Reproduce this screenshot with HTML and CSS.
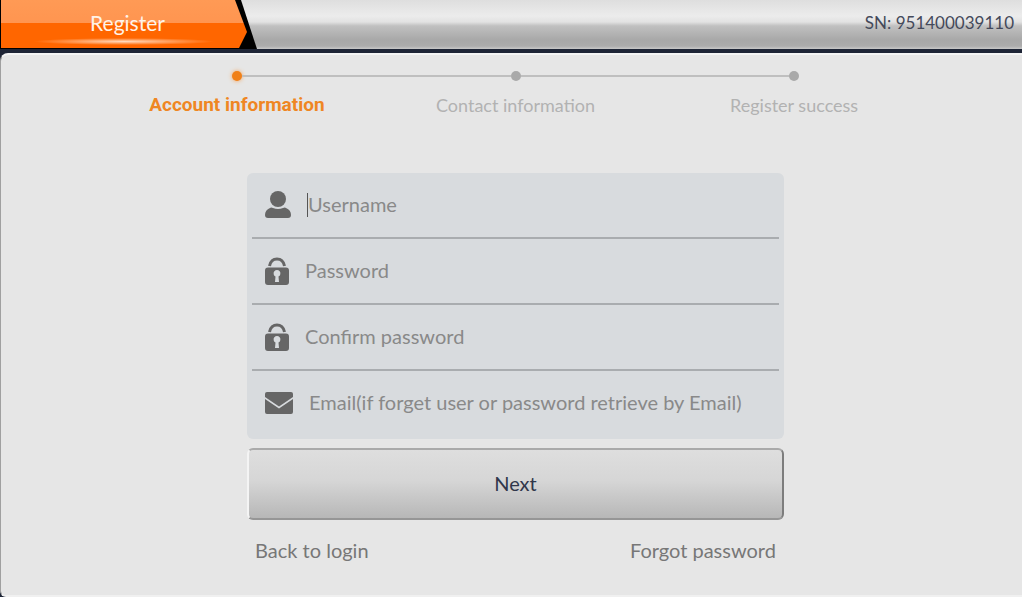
FILE: index.html
```html
<!DOCTYPE html>
<html lang="en">
<head>
    <meta charset="UTF-8">
    <meta name="viewport" content="width=device-width, initial-scale=1.0">
    <title>Register</title>
    <link rel="stylesheet" href="styles.css">
</head>
<body>
    <header class="topbar">
        <div class="title-tab">
            <h1 class="title">Register</h1>
        </div>
        <div class="serial">SN: 951400039110</div>
    </header>

    <main class="panel">
        <ol class="steps">
            <li class="step active"><span class="marker"><span class="dot"></span></span>Account information</li>
            <li class="step"><span class="marker"><span class="dot"></span></span>Contact information</li>
            <li class="step"><span class="marker"><span class="dot"></span></span>Register success</li>
        </ol>

        <form class="register-form">
            <div class="fields">
                <div class="field">
                    <label for="username" aria-label="Username">
                        <svg width="26" height="28" viewBox="0 0 26 28">
                            <circle cx="13" cy="8" r="8"/>
                            <path d="M5 17 Q6 16 8 17 Q13 19 18 17 Q20 16 21 17 Q26 19 26 24 Q26 27 23 27 H3 Q0 27 0 24 Q0 19 5 17 Z"/>
                        </svg>
                    </label>
                    <span class="caret"></span>
                    <input type="text" id="username" placeholder="Username">
                </div>
                <div class="field">
                    <label for="password" aria-label="Password">
                        <svg width="24" height="28" viewBox="0 0 24 28">
                            <path class="shackle" d="M4.5 9 C6 -0.5 18 -0.5 19.5 9"/>
                            <path fill-rule="evenodd" d="M3 10.5 H21 Q24 10.5 24 13.5 V25 Q24 28 21 28 H3 Q0 28 0 25 V13.5 Q0 10.5 3 10.5 Z M10.5 19.5 L10 25 H14 L13.5 19.5 A3.4 3.4 0 1 0 10.5 19.5 Z"/>
                        </svg>
                    </label>
                    <input type="password" id="password" placeholder="Password">
                </div>
                <div class="field">
                    <label for="confirm" aria-label="Confirm password">
                        <svg width="24" height="28" viewBox="0 0 24 28">
                            <path class="shackle" d="M4.5 9 C6 -0.5 18 -0.5 19.5 9"/>
                            <path fill-rule="evenodd" d="M3 10.5 H21 Q24 10.5 24 13.5 V25 Q24 28 21 28 H3 Q0 28 0 25 V13.5 Q0 10.5 3 10.5 Z M10.5 19.5 L10 25 H14 L13.5 19.5 A3.4 3.4 0 1 0 10.5 19.5 Z"/>
                        </svg>
                    </label>
                    <input type="password" id="confirm" placeholder="Confirm password">
                </div>
                <div class="field">
                    <label for="email" aria-label="Email">
                        <svg width="28" height="22" viewBox="0 0 28 22">
                            <path d="M2 0 H26 Q28 0 28 2 V5 L14 14.5 L0 5 V2 Q0 0 2 0 Z"/>
                            <path d="M0 7 L14 16.5 L28 7 V20 Q28 22 26 22 H2 Q0 22 0 20 Z"/>
                        </svg>
                    </label>
                    <input type="email" id="email" placeholder="Email(if forget user or password retrieve by Email)">
                </div>
            </div>

            <button type="submit" class="btn-next">Next</button>

            <div class="links">
                <a href="#">Back to login</a>
                <a href="#">Forgot password</a>
            </div>
        </form>
    </main>
</body>
</html>
```
FILE: styles.css
```css
* {
    margin: 0;
    padding: 0;
    box-sizing: border-box;
}

body {
    min-height: 100vh;
    display: flex;
    flex-direction: column;
    background-color: #1e2536;
    font-family: Lato, sans-serif;
    font-size: 20px;
    line-height: 24px;
}

.topbar {
    display: flex;
    justify-content: space-between;
    height: 49px;
    margin-bottom: 4px;
    background: linear-gradient(#dedede 0, #ececec 16px, #e2e2e2 22px, #c0c0c0 26px, #a8a8a8 40px, #acacac 46px, #c8c8c8 49px);
}

.title-tab {
    width: 257px;
    background-color: #000;
    clip-path: polygon(0 0, 241px 0, 100% 100%, 0 100%);
}

.title {
    width: 247px;
    height: 48px;
    background:
        radial-gradient(closest-side, #ffd9bd, rgba(255, 140, 60, 0)) 34px 38px / 180px 7px no-repeat,
        linear-gradient(#ff9a55 0, #ff9550 23px, #ff6600 23px);
    clip-path: polygon(1px 0, 235px 0, 100% 32px, 239px 100%, 1px 100%);
    color: #fff3e8;
    font-size: 21px;
    font-weight: normal;
    line-height: 46px;
    text-align: center;
    text-indent: 8px;
}

.serial {
    padding-right: 8px;
    color: #44495a;
    font-size: 17px;
    line-height: 46px;
}

.panel {
    flex: 1;
    padding: 16px 0 32px 8px;
    background-color: #e6e6e6;
    border-top: 2px solid #f4f4f4;
    border-bottom: 2px solid #f0f0f0;
    border-left: 1px solid #a0a0a0;
    border-radius: 8px 0 0 6px;
}

.steps {
    display: flex;
    width: 82.5%;
    margin: 0 auto 56px;
    list-style: none;
}

.step {
    flex: 1;
    color: #b2b2b2;
    font-size: 18px;
    text-align: center;
}

.marker {
    display: flex;
    align-items: center;
    height: 10px;
    margin-bottom: 12px;
}

.marker::before,
.marker::after {
    content: '';
    flex: 1;
    height: 2px;
    background-color: #bfbfbf;
}

.step:first-child .marker::before,
.step:last-child .marker::after {
    background: none;
}

.dot {
    width: 10px;
    height: 10px;
    border-radius: 50%;
    background-color: #a9a9a9;
}

.step.active {
    color: #ef8623;
    font-family: Roboto, sans-serif;
    font-size: 19px;
    font-weight: bold;
}

.step.active .dot {
    background-color: #f08018;
    box-shadow: 0 0 4px #f5a055;
}

.register-form {
    width: 53%;
    min-width: 500px;
    margin: 0 auto;
}

.fields {
    padding: 0 5px 2px;
    margin-bottom: 9px;
    border-radius: 6px;
    background-color: #d8dbde;
}

.field {
    display: flex;
    align-items: center;
    height: 66px;
    padding-left: 13px;
    border-bottom: 2px solid #a9acaf;
}

.field:last-child {
    border-bottom-color: transparent;
}

.field label {
    display: flex;
    margin-right: 16px;
}

.field svg {
    fill: #666;
}

.field .shackle {
    fill: none;
    stroke: #666;
    stroke-width: 3px;
}

.caret {
    width: 1px;
    height: 24px;
    background-color: #555;
}

.field input {
    flex: 1;
    min-width: 0;
    padding-bottom: 2px;
    border: none;
    outline: none;
    background: none;
    color: #555;
    font-family: inherit;
    font-size: 20px;
    line-height: 24px;
}

.field input::placeholder {
    color: #898989;
}

.btn-next {
    display: block;
    width: 100%;
    height: 72px;
    padding-bottom: 2px;
    border: 2px solid;
    border-color: #aaa #7d7d7d #969696 #f4f4f4;
    border-radius: 6px;
    background: linear-gradient(#dedede, #d6d6d6 45%, #b7b7b7);
    color: #30374a;
    font-family: inherit;
    font-size: 20px;
    cursor: pointer;
}

.links {
    display: flex;
    justify-content: space-between;
    padding: 18px 8px 0;
}

.links a {
    color: #777;
    font-size: 20px;
    text-decoration: none;
}
```
